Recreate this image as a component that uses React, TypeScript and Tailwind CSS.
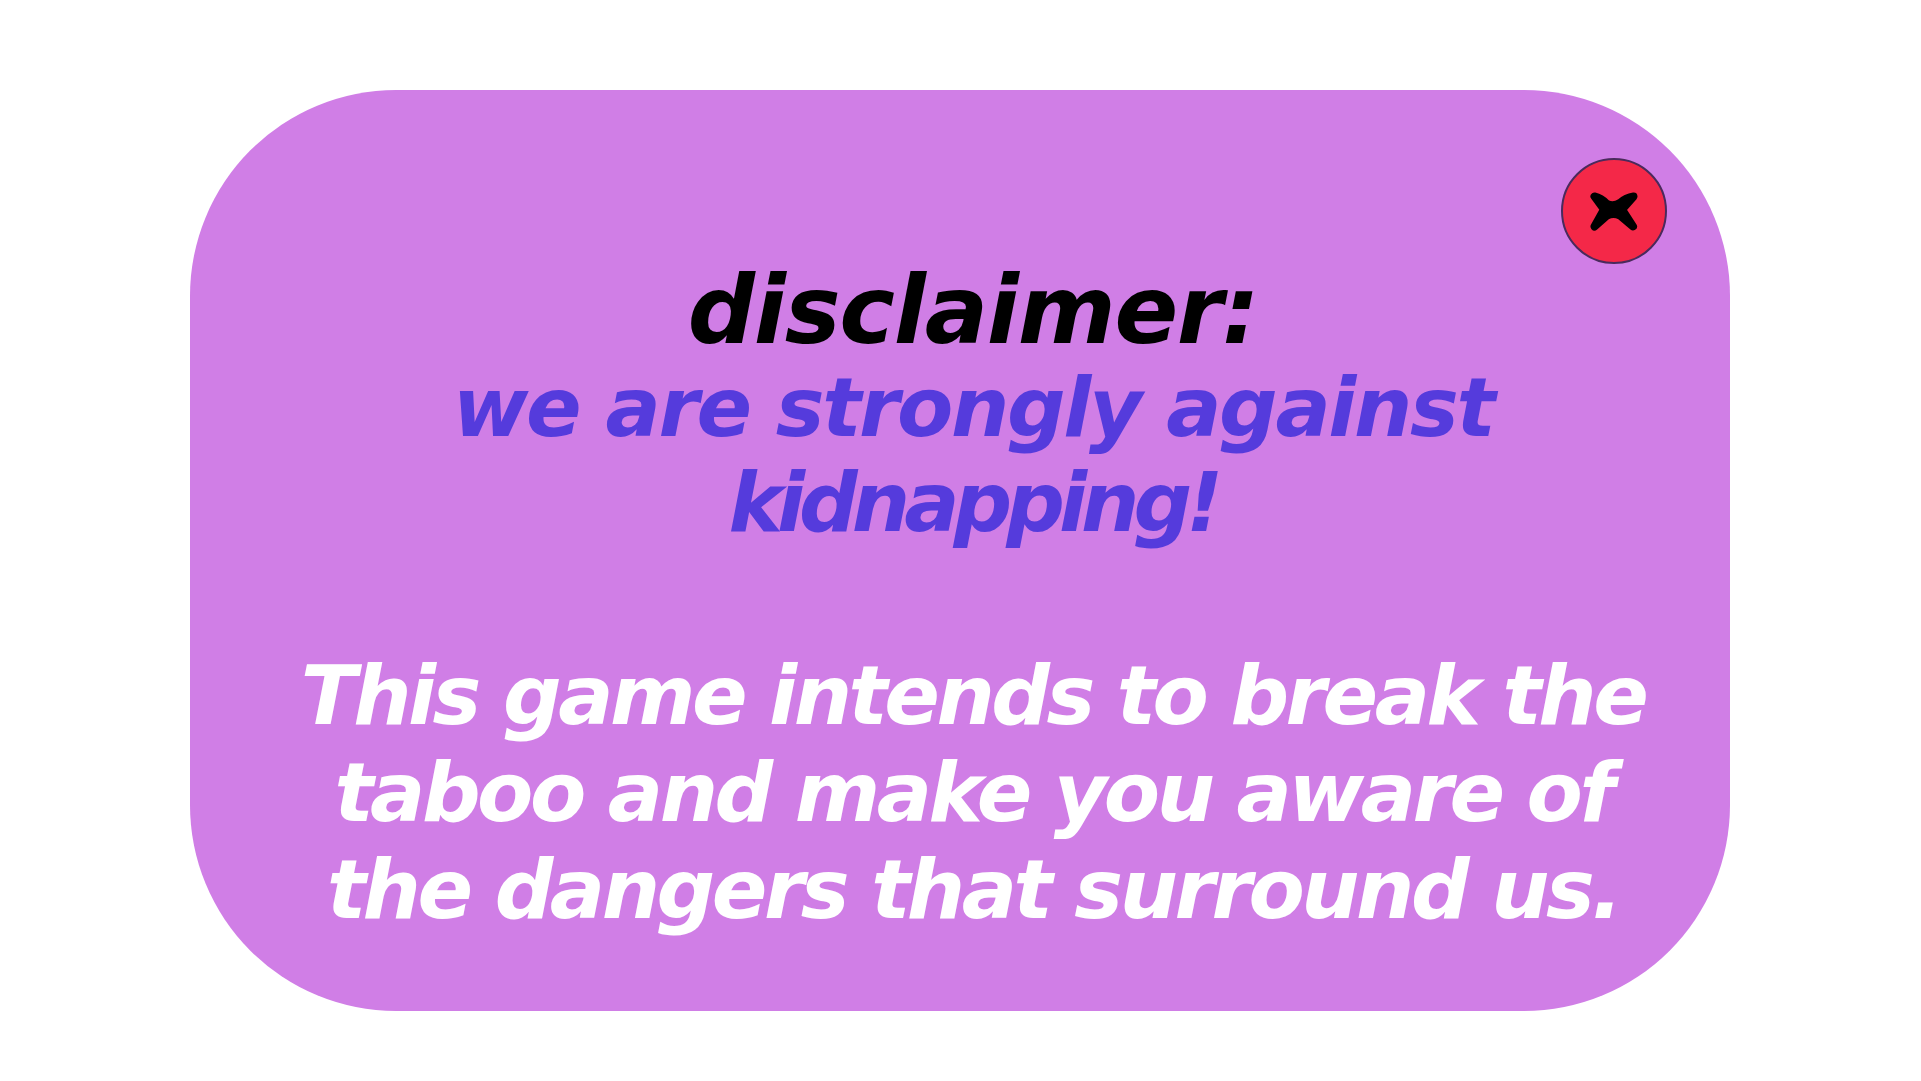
import React from 'react';

const CloseIcon = () => (
  <svg width="50" height="40" viewBox="0 0 50 40" fill="#000" stroke="#000" strokeLinecap="round" strokeLinejoin="round" strokeWidth="8">
    <path d="M5.500 5.500 Q12 7 18 13 Q24.500 16 31 12 Q37 6.500 44.500 5.500 L33 18.500 L44 35.500 L31 24.500 Q24.500 21.500 18 24.500 L5.500 35.500 L15 18.500 Z" />
  </svg>
);

export default function App() {
  return (
    <div className="w-full h-[1081px] bg-white pt-[90px] pl-[190px] overflow-hidden">
      <div className="relative w-[1540px] h-[921px] rounded-[206px] bg-[#d07ee6] flex flex-col items-center pt-[171px] pl-[26px] font-['DejaVu_Sans',sans-serif] italic font-bold text-center">
        <button className="absolute top-[68px] right-[63px] w-[106px] h-[106px] rounded-full bg-[#f42848] border-2 border-[#4a2a5c] flex items-center justify-center">
          <CloseIcon />
        </button>
        <h1 className="text-[94px] leading-[99px] text-black tracking-[-1.300px]">disclaimer:</h1>
        <p className="text-[82px] leading-[95px] text-[#553bdc] tracking-[-2.400px]">
          we are strongly against
          <br />
          <span className="tracking-[-6px]">kidnapping!</span>
        </p>
        <p className="mt-[97px] text-[82px] leading-[97px] text-white tracking-[-3.500px]">
          This game intends to break the
          <br />
          taboo and make you aware of
          <br />
          the dangers that surround us.
        </p>
      </div>
    </div>
  );
}
